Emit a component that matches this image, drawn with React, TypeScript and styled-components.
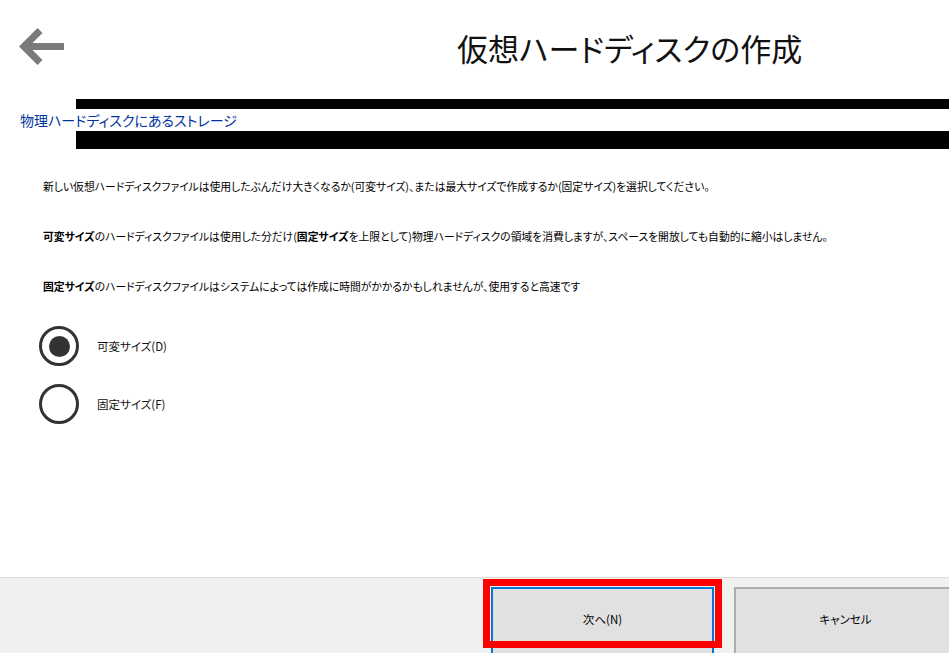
import React from 'react';
import styled, { createGlobalStyle } from 'styled-components';

const GlobalStyle = createGlobalStyle`
  html, body {
    margin: 0;
    padding: 0;
    background: #ffffff;
  }
  body {
    font-family: "Noto Sans CJK JP", "Noto Sans", sans-serif;
    color: #000;
    overflow: hidden;
  }
`;

const Page = styled.div`
  height: 100vh;
  display: flex;
  flex-direction: column;
  background: #fff;
`;

const Main = styled.div`
  flex: 1;
  display: flex;
  flex-direction: column;
`;

const Header = styled.div`
  height: 99px;
  display: flex;
  align-items: flex-start;
  box-sizing: border-box;
`;

const BackButton = styled.button`
  margin: 28px 0 0 19px;
  padding: 0;
  border: none;
  background: none;
  width: 46px;
  height: 38px;
  cursor: pointer;
`;

const Title = styled.h1`
  margin: 26px 0 0 392px;
  font-size: 31px;
  font-weight: 400;
  line-height: 44px;
  font-feature-settings: "palt";
  color: #111;
`;

const Bar = styled.div<{ h: number }>`
  height: ${({ h }) => h}px;
  margin-left: 76px;
  background: #000;
`;

const LinkRow = styled.div`
  height: 22px;
  display: flex;
  align-items: center;
  padding-left: 20px;
`;

const StorageLink = styled.a`
  font-size: 14px;
  color: #0033a0;
  font-feature-settings: "palt";
  text-decoration: none;
`;

const Body = styled.div`
  padding: 29px 0 0 43px;
  display: flex;
  flex-direction: column;
  gap: 34px;
`;

const Para = styled.p`
  margin: 0;
  font-size: 10.8px;
  line-height: 16px;
  font-feature-settings: "palt";
  white-space: nowrap;

  b {
    font-weight: 700;
  }
`;

const Options = styled.div`
  margin: 32px 0 0 39px;
  display: flex;
  flex-direction: column;
  gap: 18px;
`;

const OptionRow = styled.label`
  display: flex;
  align-items: center;
  gap: 18px;
  cursor: pointer;
`;

const RadioCircle = styled.span<{ checked?: boolean }>`
  width: 40px;
  height: 40px;
  box-sizing: border-box;
  border: 3px solid #333;
  border-radius: 50%;
  display: flex;
  align-items: center;
  justify-content: center;

  &::after {
    content: '';
    width: 21px;
    height: 21px;
    border-radius: 50%;
    background: #333;
    display: ${({ checked }) => (checked ? 'block' : 'none')};
  }
`;

const OptionLabel = styled.span`
  font-size: 11.5px;
  font-feature-settings: "palt";
  color: #111;
`;

const Footer = styled.div`
  height: 76px;
  border-top: 1px solid #dcdcdc;
  background: #f0f0f0;
  box-sizing: border-box;
  display: flex;
  align-items: flex-start;
  padding: 9px 0 0 491px;
  gap: 20px;
  overflow: visible;
`;

const FooterButton = styled.button<{ primary?: boolean }>`
  position: relative;
  flex: 0 0 auto;
  width: 223px;
  height: 70px;
  box-sizing: border-box;
  background: #e1e1e1;
  border: 2px solid ${({ primary }) => (primary ? '#0078d7' : '#adadad')};
  font-family: "Noto Sans CJK JP", sans-serif;
  font-size: 11.5px;
  color: #000;
  padding: 0 0 6px;
  font-feature-settings: "palt";
`;

const Highlight = styled.span`
  position: absolute;
  top: -10px;
  left: -10px;
  right: -10px;
  height: 69px;
  border: 7px solid #ff0000;
  box-sizing: border-box;
  pointer-events: none;
`;

const BackArrow = () => (
  <svg width="46" height="38" viewBox="0 0 46 38">
    <path d="M45 18.5 H6" stroke="#7a7a7a" strokeWidth="7" fill="none" />
    <path d="M21 2.5 L5 18.5 L21 34.5" stroke="#7a7a7a" strokeWidth="7" fill="none" strokeLinejoin="miter" />
  </svg>
);

export default function App() {
  const [mode, setMode] = React.useState<'dynamic' | 'fixed'>('dynamic');

  return (
    <>
      <GlobalStyle />
      <Page>
        <Main>
          <Header>
            <BackButton aria-label="戻る">
              <BackArrow />
            </BackButton>
            <Title>仮想ハードディスクの作成</Title>
          </Header>

          <Bar h={10} />
          <LinkRow>
            <StorageLink href="#">物理ハードディスクにあるストレージ</StorageLink>
          </LinkRow>
          <Bar h={18} />

          <Body>
            <Para>
              新しい仮想ハードディスクファイルは使用したぶんだけ大きくなるか(可変サイズ)、または最大サイズで作成するか(固定サイズ)を選択してください。
            </Para>
            <Para>
              <b>可変サイズ</b>のハードディスクファイルは使用した分だけ(<b>固定サイズ</b>を上限として)物理ハードディスクの領域を消費しますが、スペースを開放しても自動的に縮小はしません。
            </Para>
            <Para>
              <b>固定サイズ</b>のハードディスクファイルはシステムによっては作成に時間がかかるかもしれませんが、使用すると高速です
            </Para>
          </Body>

          <Options>
            <OptionRow onClick={() => setMode('dynamic')}>
              <RadioCircle checked={mode === 'dynamic'} />
              <OptionLabel>可変サイズ(D)</OptionLabel>
            </OptionRow>
            <OptionRow onClick={() => setMode('fixed')}>
              <RadioCircle checked={mode === 'fixed'} />
              <OptionLabel>固定サイズ(F)</OptionLabel>
            </OptionRow>
          </Options>
        </Main>

        <Footer>
          <FooterButton primary>
            次へ(N)
            <Highlight />
          </FooterButton>
          <FooterButton>キャンセル</FooterButton>
        </Footer>
      </Page>
    </>
  );
}
